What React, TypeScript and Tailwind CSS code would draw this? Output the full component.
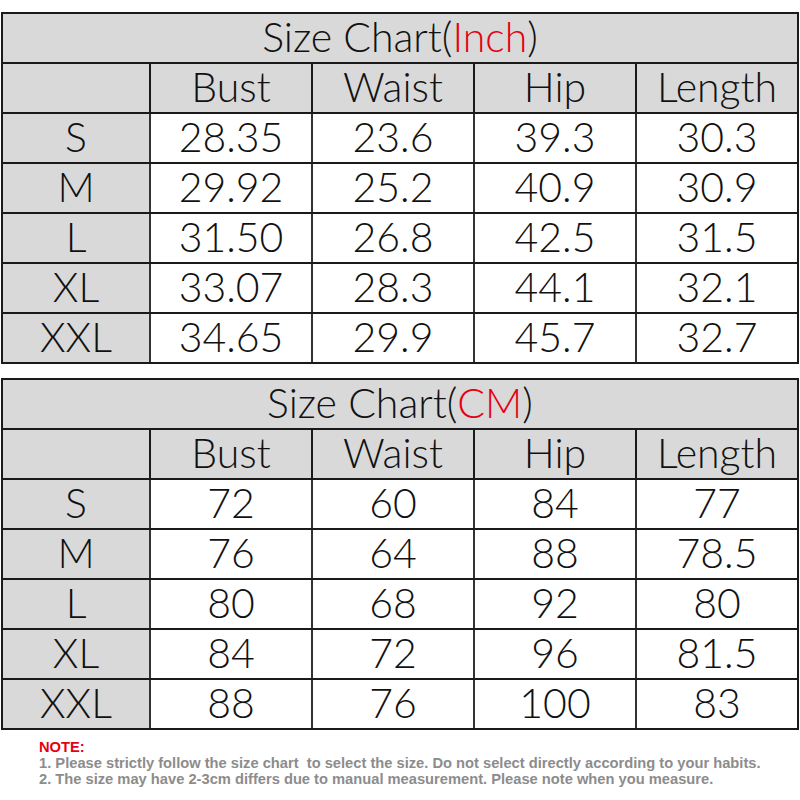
const cols = ["Bust", "Waist", "Hip", "Length"];

const inch = [
  ["S", "28.35", "23.6", "39.3", "30.3"],
  ["M", "29.92", "25.2", "40.9", "30.9"],
  ["L", "31.50", "26.8", "42.5", "31.5"],
  ["XL", "33.07", "28.3", "44.1", "32.1"],
  ["XXL", "34.65", "29.9", "45.7", "32.7"],
];

const cm = [
  ["S", "72", "60", "84", "77"],
  ["M", "76", "64", "88", "78.5"],
  ["L", "80", "68", "92", "80"],
  ["XL", "84", "72", "96", "81.5"],
  ["XXL", "88", "76", "100", "83"],
];

function SizeTable({ unit, rows }: { unit: string; rows: string[][] }) {
  return (
    <div className="mx-[1px] w-[798px] border-2 border-[#1a1a1a] text-[41px] font-light leading-none text-[#111]">
      <div className="flex h-[48px] items-center justify-center bg-[#d9d9d9] pb-[3px]">
        Size Chart(<span className="text-[#e60012]">{unit}</span>)
      </div>
      <div className="flex h-[50px] border-t-2 border-[#1a1a1a] bg-[#d9d9d9]">
        <div className="w-[146px]" />
        {cols.map((c) => (
          <div key={c} className="flex flex-1 items-center justify-center border-l-2 border-[#1a1a1a] pb-[3px]">
            {c}
          </div>
        ))}
      </div>
      {rows.map((r) => (
        <div key={r[0]} className="flex h-[50px] border-t-2 border-[#1a1a1a]">
          <div className="flex w-[146px] items-center justify-center bg-[#d9d9d9] pb-[3px]">{r[0]}</div>
          {r.slice(1).map((v, i) => (
            <div key={i} className="flex flex-1 items-center justify-center border-l-2 border-[#333] bg-white pb-[3px]">
              {v}
            </div>
          ))}
        </div>
      ))}
    </div>
  );
}

export default function App() {
  return (
    <div className="h-[800px] w-[800px] overflow-hidden bg-white pt-[12px] [font-family:Lato,'Noto_Sans',sans-serif]">
      <SizeTable unit="Inch" rows={inch} />
      <div className="h-[14px]" />
      <SizeTable unit="CM" rows={cm} />
      <div className="pl-[39px] pt-[9px] text-[14.7px] font-bold leading-[16px] [font-family:'Liberation_Sans',Arial,sans-serif]">
        <div className="text-[#e60012]">NOTE:</div>
        <div className="text-[#8c8c8c]">
          1. Please strictly follow the size chart&nbsp; to select the size. Do not select directly according to your habits.
        </div>
        <div className="text-[#8c8c8c]">
          2. The size may have 2-3cm differs due to manual measurement. Please note when you measure.
        </div>
      </div>
    </div>
  );
}
